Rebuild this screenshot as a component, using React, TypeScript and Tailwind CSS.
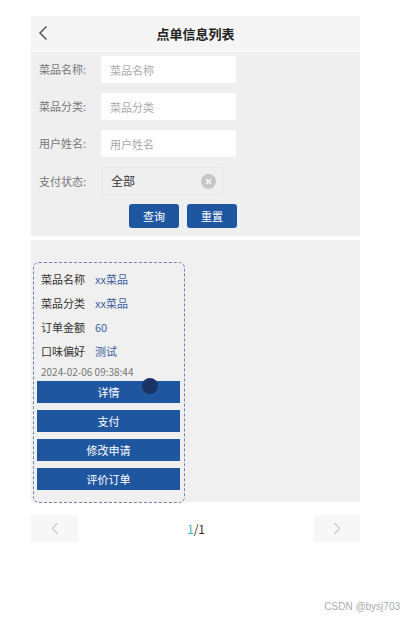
import { useState } from "react";

const CJK = "font-['Noto_Sans_CJK_SC','Noto_Sans',sans-serif]";

interface FieldProps {
  label: string;
  placeholder: string;
}

function Field({ label, placeholder }: FieldProps) {
  return (
    <div className="flex items-center h-[27px]">
      <span className="w-[70px] shrink-0 pl-2 text-[11px] text-[#777]">{label}</span>
      <input
        className="w-[135px] h-full bg-white rounded-[2px] px-[9px] text-[11px] text-[#333] placeholder:text-[#aaa] outline-none"
        placeholder={placeholder}
      />
    </div>
  );
}

const details = [
  { label: "菜品名称", value: "xx菜品" },
  { label: "菜品分类", value: "xx菜品" },
  { label: "订单金额", value: "60" },
  { label: "口味偏好", value: "测试" },
];

const actions = ["详情", "支付", "修改申请", "评价订单"];

export default function App() {
  const [status, setStatus] = useState("全部");

  return (
    <div className={`w-[404px] h-[617px] bg-white relative ${CJK}`}>
      <div className="pt-4 pl-[31px] w-[360px]">
        {/* header */}
        <div className="h-[35px] bg-[#f5f5f5] flex items-center relative">
          <svg className="absolute left-[7px] top-[9px]" width="10" height="16" viewBox="0 0 10 16" fill="none">
            <path d="M8.5 1.5 L2 8 L8.5 14.5" stroke="#555" strokeWidth="1.5" />
          </svg>
          <h1 className="w-full text-center text-[13px] font-bold text-[#222]">点单信息列表</h1>
        </div>

        {/* search form */}
        <div className="mt-[1px] bg-[#efefef] pt-[4px] pb-[8px] flex flex-col gap-[10px]">
          <Field label="菜品名称:" placeholder="菜品名称" />
          <Field label="菜品分类:" placeholder="菜品分类" />
          <Field label="用户姓名:" placeholder="用户姓名" />
          <div className="flex items-center h-[28px]">
            <span className="w-[70px] shrink-0 pl-2 text-[11px] text-[#777]">支付状态:</span>
            <div className="w-[123px] h-full border border-[#e8e8e8] rounded-[3px] flex items-center justify-between pl-[9px] pr-[7px]">
              <span className="text-[12px] text-[#333]">{status}</span>
              <button
                onClick={() => setStatus("全部")}
                className="w-[15px] h-[15px] rounded-full bg-[#c6c6c8] flex items-center justify-center"
              >
                <svg width="7" height="7" viewBox="0 0 7 7">
                  <path d="M1 1 L6 6 M6 1 L1 6" stroke="#fff" strokeWidth="1.2" />
                </svg>
              </button>
            </div>
          </div>
          <div className="flex gap-2 pl-[98px] -mt-[1px]">
            <button className="w-[50px] h-[24px] rounded-[3px] bg-[#1f56a0] text-white text-[11px]">查询</button>
            <button className="w-[50px] h-[24px] rounded-[3px] bg-[#1f56a0] text-white text-[11px]">重置</button>
          </div>
        </div>

        {/* list */}
        <div className="mt-[4px] bg-[#f0f0f0] pt-[22px] pl-[2px] h-[262px]">
          <div className="w-[152px] border border-dashed border-[#7083aa] rounded-[6px] pt-[4px] pb-[12px] relative">
            {details.map((d) => (
              <div key={d.label} className="h-6 flex items-center pl-[7px] text-[11px]">
                <span className="w-[54px] text-[#333]">{d.label}</span>
                <span className="text-[#3d5fa0]">{d.value}</span>
              </div>
            ))}
            <div className="h-4 flex items-center pl-[7px] text-[10px] text-[#777]">2024-02-06 09:38:44</div>
            <div className="mt-[2px] pl-[3px] flex flex-col gap-[7px]">
              {actions.map((a) => (
                <button key={a} className="w-[143px] h-[22px] bg-[#1f56a0] text-white text-[11px]">
                  {a}
                </button>
              ))}
            </div>
            <span className="absolute left-[108px] top-[115px] w-[16px] h-[16px] rounded-full bg-[#1b3466]" />
          </div>
        </div>

        {/* pagination */}
        <div className="mt-[13px] h-[27px] flex items-center justify-between">
          <button className="w-[47px] h-full bg-[#f7f7f7] flex items-center justify-center">
            <svg width="8" height="13" viewBox="0 0 8 13" fill="none">
              <path d="M6.5 1 L1.5 6.5 L6.5 12" stroke="#c8c8c8" strokeWidth="1.2" />
            </svg>
          </button>
          <span className="text-[12px] text-[#333]">
            <span className="text-[#3eb3c0]">1</span>/1
          </span>
          <button className="w-[46px] h-full bg-[#f7f7f7] flex items-center justify-center">
            <svg width="8" height="13" viewBox="0 0 8 13" fill="none">
              <path d="M1.5 1 L6.5 6.5 L1.5 12" stroke="#c8c8c8" strokeWidth="1.2" />
            </svg>
          </button>
        </div>
      </div>

      <span className="absolute right-[4px] top-[599px] text-[10px] text-[#aaa] font-['Liberation_Sans',sans-serif]">
        CSDN @bysj703
      </span>
    </div>
  );
}
